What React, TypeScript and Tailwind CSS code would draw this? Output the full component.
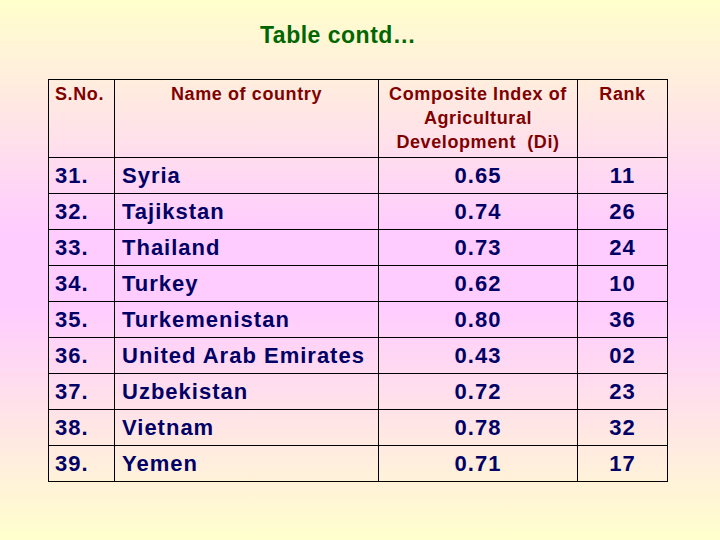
import React from "react";

const rows = [
  ["31.", "Syria", "0.65", "11"],
  ["32.", "Tajikstan", "0.74", "26"],
  ["33.", "Thailand", "0.73", "24"],
  ["34.", "Turkey", "0.62", "10"],
  ["35.", "Turkemenistan", "0.80", "36"],
  ["36.", "United Arab Emirates", "0.43", "02"],
  ["37.", "Uzbekistan", "0.72", "23"],
  ["38.", "Vietnam", "0.78", "32"],
  ["39.", "Yemen", "0.71", "17"],
];

export default function App() {
  return (
    <div
      className="w-[720px] h-[540px] overflow-hidden bg-[linear-gradient(180deg,#ffffcc_0%,#ffccff_43%,#ffccff_57%,#ffffcc_100%)]"
      style={{ fontFamily: '"Liberation Sans", Arial, sans-serif' }}
    >
      <div className="pt-[21px] h-[79px]">
        <div className="ml-[260px] text-[23px] leading-[28px] font-bold tracking-[0.5px] text-[#006600]">
          Table contd…
        </div>
      </div>
      <div className="ml-[48px] w-[620px] border-l border-t border-black grid grid-cols-[66px_264px_199px_90px]">
        <div className="h-[78px] border-r border-b border-black pl-[6px] pt-[2px] text-[18px] leading-[24px] font-bold tracking-[0.6px] text-[#800000]">
          S.No.
        </div>
        <div className="h-[78px] border-r border-b border-black pt-[2px] text-center text-[18px] leading-[24px] font-bold tracking-[0.6px] text-[#800000]">
          Name of country
        </div>
        <div className="h-[78px] border-r border-b border-black pt-[2px] text-center text-[18px] leading-[24px] font-bold tracking-[0.6px] text-[#800000]">
          Composite Index of
          <br />
          Agricultural
          <br />
          Development&nbsp; (Di)
        </div>
        <div className="h-[78px] border-r border-b border-black pt-[2px] text-center text-[18px] leading-[24px] font-bold tracking-[0.6px] text-[#800000]">
          Rank
        </div>
        {rows.map((r) => (
          <React.Fragment key={r[0]}>
            <div className="h-[36px] border-r border-b border-black pl-[6px] flex items-center text-[22px] font-bold tracking-[1px] text-[#000066]">
              {r[0]}
            </div>
            <div className="h-[36px] border-r border-b border-black pl-[7px] flex items-center text-[22px] font-bold tracking-[1px] text-[#000066]">
              {r[1]}
            </div>
            <div className="h-[36px] border-r border-b border-black flex items-center justify-center text-[22px] font-bold tracking-[1px] text-[#000066]">
              {r[2]}
            </div>
            <div className="h-[36px] border-r border-b border-black flex items-center justify-center text-[22px] font-bold tracking-[1px] text-[#000066]">
              {r[3]}
            </div>
          </React.Fragment>
        ))}
      </div>
    </div>
  );
}
